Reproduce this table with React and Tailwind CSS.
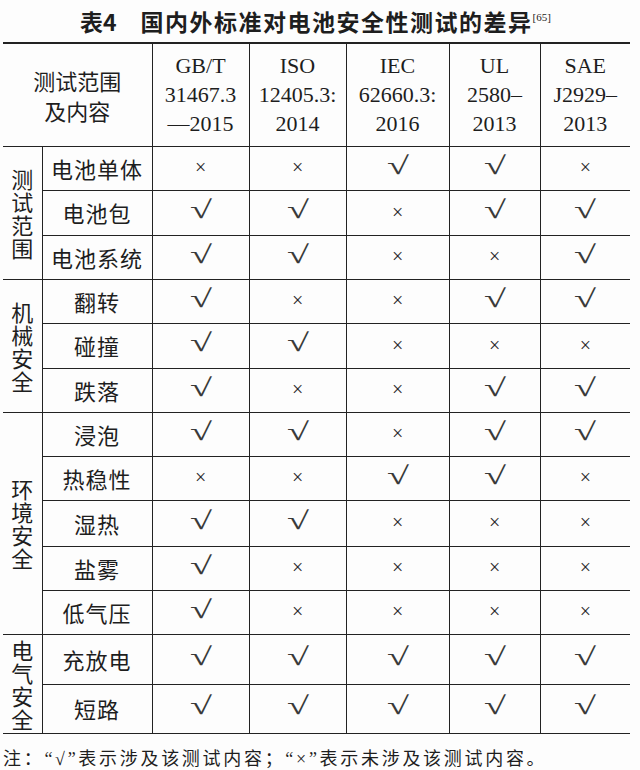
import React from 'react';

const cols = [
  ['GB/T', '31467.3', '—2015'],
  ['ISO', '12405.3:', '2014'],
  ['IEC', '62660.3:', '2016'],
  ['UL', '2580–', '2013'],
  ['SAE', 'J2929–', '2013'],
];

// 1 = √, 0 = ×
const groups = [
  {
    name: '测试范围',
    rows: [
      ['电池单体', [0, 0, 1, 1, 0], 'h-[44px]'],
      ['电池包', [1, 1, 0, 1, 1], 'h-[45px]'],
      ['电池系统', [1, 1, 0, 0, 1], 'h-[44px]'],
    ],
  },
  {
    name: '机械安全',
    rows: [
      ['翻转', [1, 0, 0, 1, 1], 'h-[44px]'],
      ['碰撞', [1, 1, 0, 0, 0], 'h-[45px]'],
      ['跌落', [1, 0, 0, 1, 1], 'h-[44px]'],
    ],
  },
  {
    name: '环境安全',
    rows: [
      ['浸泡', [1, 1, 0, 1, 1], 'h-[44px]'],
      ['热稳性', [0, 0, 1, 1, 0], 'h-[44px]'],
      ['湿热', [1, 1, 0, 0, 0], 'h-[46px]'],
      ['盐雾', [1, 0, 0, 0, 0], 'h-[44px]'],
      ['低气压', [1, 0, 0, 0, 0], 'h-[44px]'],
    ],
  },
  {
    name: '电气安全',
    rows: [
      ['充放电', [1, 1, 1, 1, 1], 'h-[50px]'],
      ['短路', [1, 1, 1, 1, 1], 'h-[49px]'],
    ],
  },
];

const cjk = "font-['Noto_Sans_CJK_SC',sans-serif]";
const serif = "font-['Liberation_Serif','Noto_Sans_CJK_SC',serif]";

const Mark = ({ ok }) =>
  ok ? (
    <span className={`${serif} inline-block scale-x-[1.6] text-[25px] leading-none text-[#3a3a3a] relative -top-[2px]`}>√</span>
  ) : (
    <span className={`${serif} text-[20px] leading-none text-[#2a2a2a]`}>×</span>
  );

export default function App() {
  return (
    <div className="w-[640px] h-[770px] bg-[#fdfdfd] text-[#1e1e1e] overflow-hidden">
      {/* Title */}
      <div className={`${cjk} h-[42px] flex items-center pl-[80px] text-[23px] font-semibold`}>
        <span>表4</span>
        <span className="ml-[24px] tracking-[1.5px]">国内外标准对电池安全性测试的差异</span>
        <sup className={`${serif} text-[11px] font-normal relative -top-[4px]`}>[65]</sup>
      </div>

      <table className="ml-[3px] w-[627px] table-fixed border-collapse">
        <colgroup>
          <col className="w-[39px]" />
          <col className="w-[110px]" />
          <col className="w-[97px]" />
          <col className="w-[97px]" />
          <col className="w-[103px]" />
          <col className="w-[91px]" />
          <col className="w-[90px]" />
        </colgroup>
        <thead>
          <tr className="h-[103px] border-t-2 border-b-[1.5px] border-[#222]">
            <th
              colSpan={2}
              className={`${cjk} font-normal text-[22px] leading-[30px] text-center border-r-[1.5px] border-[#222]`}
            >
              测试范围
              <br />
              及内容
            </th>
            {cols.map((c, i) => (
              <th
                key={i}
                className={`${serif} font-normal text-[22px] leading-[29px] text-center ${
                  i < cols.length - 1 ? 'border-r-[1.5px] border-[#222]' : ''
                }`}
              >
                {c.map((l, j) => (
                  <div key={j}>{l}</div>
                ))}
              </th>
            ))}
          </tr>
        </thead>
        <tbody>
          {groups.map((g) =>
            g.rows.map(([label, vals, h], ri) => (
              <tr key={label} className={`${h} border-b-[1.5px] border-[#222]`}>
                {ri === 0 && (
                  <td
                    rowSpan={g.rows.length}
                    className={`${cjk} text-[22px] leading-[23px] text-center align-middle border-r-[1.5px] border-[#222]`}
                  >
                    {g.name.split('').map((ch, k) => (
                      <div key={k}>{ch}</div>
                    ))}
                  </td>
                )}
                <td className={`${cjk} text-[22px] text-center tracking-[1px] border-r-[1.5px] border-[#222]`}>
                  {label}
                </td>
                {vals.map((v, k) => (
                  <td
                    key={k}
                    className={`text-center align-middle ${
                      k < vals.length - 1 ? 'border-r-[1.5px] border-[#222]' : ''
                    }`}
                  >
                    <Mark ok={v} />
                  </td>
                ))}
              </tr>
            ))
          )}
        </tbody>
      </table>

      {/* Note */}
      <p className={`${serif} pl-[3px] pt-[13px] text-[18px] leading-[24px] tracking-[2.7px]`}>
        注：“√”表示涉及该测试内容；“×”表示未涉及该测试内容。
      </p>
    </div>
  );
}
